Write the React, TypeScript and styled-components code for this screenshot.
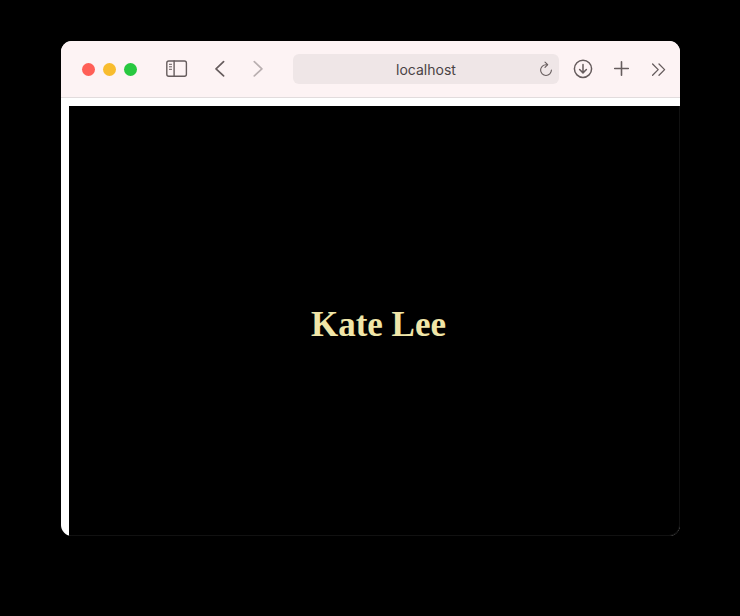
import React from "react";
import styled, { createGlobalStyle } from "styled-components";

const GlobalStyle = createGlobalStyle`
  *, *::before, *::after { box-sizing: border-box; }
  body { margin: 0; background: #000; }
`;

const Desktop = styled.main`
  display: flex;
  min-height: 100vh;
  padding: 41px 60px 80px 61px;
  background: #000;
`;

const BrowserWindow = styled.section`
  position: relative;
  display: flex;
  flex: 1;
  flex-direction: column;
  min-width: 0;
  overflow: hidden;
  border-radius: 11px;
  background: #fff;

  &::after {
    content: "";
    position: absolute;
    inset: 65px 0 0 8px;
    border: solid #111;
    border-width: 0 1px 1px 0;
    border-radius: 0 0 11px 0;
    pointer-events: none;
  }
`;

const Toolbar = styled.header`
  display: flex;
  align-items: center;
  height: 57px;
  padding: 0 9px 0 21px;
  border-bottom: 1px solid #e2dcdd;
  background: #fdf3f4;
`;

const Lights = styled.div`
  display: flex;
  gap: 8px;
`;

const Light = styled.button<{ $color: string }>`
  width: 13px;
  height: 13px;
  padding: 0;
  border: 0;
  border-radius: 50%;
  background: ${(p) => p.$color};
`;

const Tools = styled.div<{ $gap: number }>`
  display: flex;
  align-items: center;
  gap: ${(p) => p.$gap}px;
`;

const IconButton = styled.button<{ $faint?: boolean }>`
  display: grid;
  place-items: center;
  width: 24px;
  height: 24px;
  padding: 0;
  border: 0;
  background: transparent;
  color: ${(p) => (p.$faint ? "#b9afb0" : "#665c5d")};

  svg {
    display: block;
    fill: none;
    stroke: currentColor;
    stroke-linecap: round;
    stroke-linejoin: round;
  }
`;

const LeftTools = styled(Tools)`
  margin: 0 23px 0 28px;
`;

const RightTools = styled(Tools)`
  margin-left: 12px;
`;

const AddressBar = styled.form`
  display: grid;
  flex: 1;
  grid-template-columns: 26px minmax(0, 1fr) 26px;
  align-items: center;
  height: 30px;
  border-radius: 6px;
  background: #efe6e7;
`;

const AddressInput = styled.input`
  grid-column: 2;
  width: 100%;
  height: 30px;
  padding: 0;
  border: 0;
  outline: 0;
  background: transparent;
  color: #4a4344;
  font: 14px/20px Inter, "Liberation Sans", sans-serif;
  text-align: center;
`;

const Viewport = styled.div`
  display: flex;
  flex: 1;
  padding: 8px 0 0 8px;
  overflow: hidden;
`;

/* Fills the whole viewport, so the page margin pushes it past the far edges. */
const Scene = styled.article`
  display: grid;
  flex: 1;
  place-items: center;
  margin: 0 -8px -8px 0;
  background: #000;
`;

const Name = styled.h1`
  margin: 0;
  color: #f0e6a8;
  font: bold 35px/42px "Liberation Serif", serif;
`;

export default function App() {
  return (
    <Desktop>
      <GlobalStyle />
      <BrowserWindow>
        <Toolbar>
          <Lights>
            <Light $color="#ff5f57" aria-label="Close" />
            <Light $color="#f8bc2e" aria-label="Minimize" />
            <Light $color="#28c840" aria-label="Zoom" />
          </Lights>
          <LeftTools $gap={19}>
            <IconButton aria-label="Show sidebar">
              <svg width="24" height="24" viewBox="0 0 24 24" strokeWidth="1.4">
                <rect x="1.8" y="4" width="19.6" height="15.2" rx="2" />
                <path d="M9.1 4v15.2" />
                <path d="M4.4 7.3h2.2M4.4 9.8h2.2M4.4 12.3h2.2" strokeWidth="1" />
              </svg>
            </IconButton>
            <Tools $gap={14}>
              <IconButton aria-label="Back">
                <svg width="24" height="24" viewBox="0 0 24 24" strokeWidth="1.7">
                  <path d="M15.6 4.7 8 11.8l7.6 7.1" />
                </svg>
              </IconButton>
              <IconButton aria-label="Forward" $faint>
                <svg width="24" height="24" viewBox="0 0 24 24" strokeWidth="1.7">
                  <path d="m8.3 4.7 7.6 7.1-7.6 7.1" />
                </svg>
              </IconButton>
            </Tools>
          </LeftTools>
          <AddressBar onSubmit={(e: React.FormEvent) => e.preventDefault()}>
            <AddressInput aria-label="Address" defaultValue="localhost" />
            <IconButton type="button" aria-label="Reload">
              <svg width="24" height="24" viewBox="0 0 24 24" strokeWidth="1.1">
                <path d="M14.3 7.7h-1.3a5.4 5.4 0 1 0 5.4 5.4" />
                <path d="m12 5.1 2.7 2.6-2.7 2.7" />
              </svg>
            </IconButton>
          </AddressBar>
          <RightTools $gap={14}>
            <IconButton aria-label="Downloads">
              <svg width="24" height="24" viewBox="0 0 24 24" strokeWidth="1.5">
                <circle cx="12" cy="11.8" r="8.6" />
                <path d="M12 7.4v8.4m-3.4-3.3 3.4 3.4 3.4-3.4" />
              </svg>
            </IconButton>
            <IconButton aria-label="New tab">
              <svg width="24" height="24" viewBox="0 0 24 24" strokeWidth="1.6">
                <path d="M12.5 4.7v13.6M5.7 11.5h13.6" />
              </svg>
            </IconButton>
            <IconButton aria-label="More">
              <svg width="24" height="24" viewBox="0 0 24 24" strokeWidth="1.3">
                <path d="m5.6 7 5.6 5.6-5.6 5.6M12 7l5.6 5.6-5.6 5.6" />
              </svg>
            </IconButton>
          </RightTools>
        </Toolbar>
        <Viewport>
          <Scene>
            <Name>Kate Lee</Name>
          </Scene>
        </Viewport>
      </BrowserWindow>
    </Desktop>
  );
}
